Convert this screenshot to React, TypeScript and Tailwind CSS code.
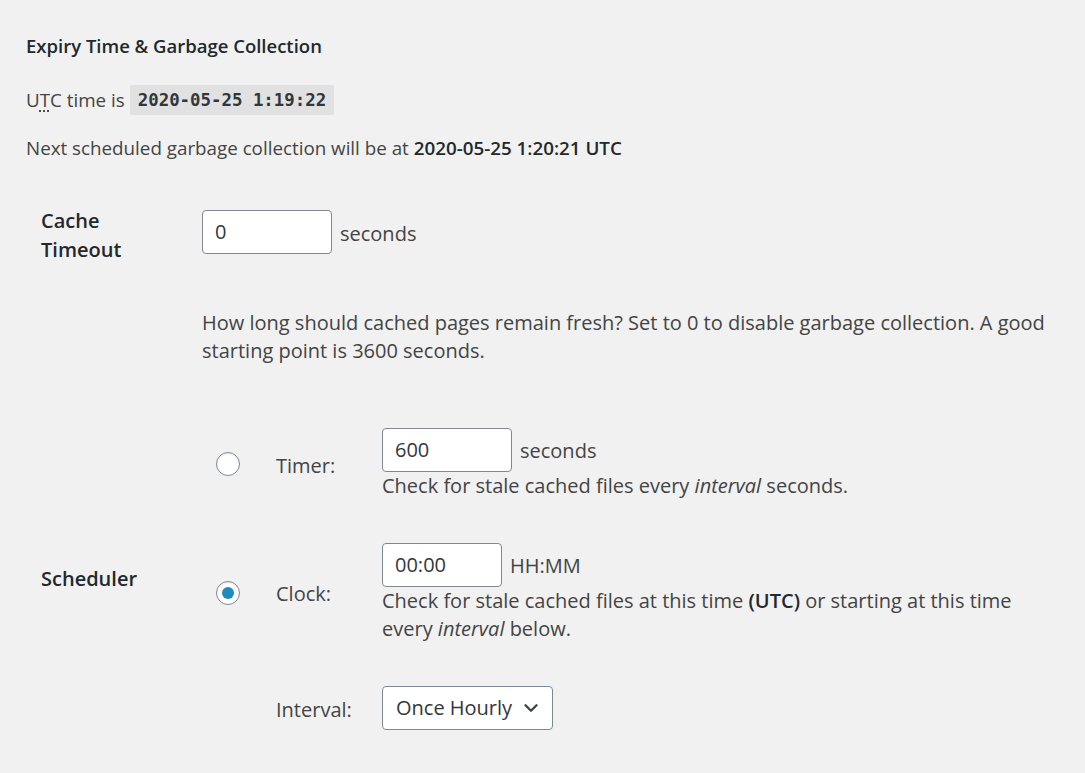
import { ChevronDown } from "lucide-react";

const textFont = { fontFamily: '"Open Sans", "Noto Sans", sans-serif' };

function TextInput({ value, width }: { value: string; width: string }) {
  return (
    <div
      className={`${width} h-[44px] shrink-0 rounded-[4px] border border-[#7e8993] bg-white px-[12px] flex items-center text-[#32373c]`}
    >
      {value}
    </div>
  );
}

function Radio({ checked }: { checked?: boolean }) {
  return (
    <span className="w-[24px] h-[24px] rounded-full border-[1.5px] border-[#7e8993] bg-white shadow-[inset_0_1px_2px_rgba(0,0,0,0.1)] flex items-center justify-center">
      {checked && <span className="w-[12px] h-[12px] rounded-full bg-[#1e8cbe]" />}
    </span>
  );
}

export default function App() {
  return (
    <div
      className="min-h-screen w-full bg-[#f1f1f1] text-[#444] pl-[26px] pr-[20px] pt-[32px] pb-[40px] text-[18.8px]"
      style={textFont}
    >
      <h4 className="font-semibold text-[#23282d] leading-[28px] text-[18.5px]">Expiry Time &amp; Garbage Collection</h4>

      <p className="mt-[25px] leading-[30px] flex items-center">
        <span>
          U<span className="underline decoration-dotted underline-offset-4">T</span>C time is
        </span>
        <code
          className="ml-[5px] bg-[#e1e1e1] px-[8px] h-[30px] flex items-center text-[17.4px] font-bold text-[#32373c]"
          style={{ fontFamily: '"DejaVu Sans Mono", "Liberation Mono", monospace' }}
        >
          2020-05-25 1:19:22
        </code>
      </p>

      <p className="mt-[19px] leading-[28px]">
        Next scheduled garbage collection will be at{" "}
        <strong className="font-semibold text-[#23282d]">2020-05-25 1:20:21 UTC</strong>
      </p>

      <div className="mt-[44px] text-[20px]">
        {/* Cache Timeout */}
        <div className="flex">
          <div className="w-[176px] shrink-0 pl-[15px] font-semibold text-[#23282d] leading-[29px]">
            Cache
            <br />
            Timeout
          </div>
          <div className="pt-[4px]">
            <div className="flex items-center gap-[8px]">
              <TextInput value="0" width="w-[130px]" />
              <span className="pt-[3px]">seconds</span>
            </div>
            <p className="mt-[55px] leading-[28px] whitespace-nowrap">
              How long should cached pages remain fresh? Set to 0 to disable garbage collection. A good
              <br />
              starting point is 3600 seconds.
            </p>
          </div>
        </div>

        {/* Scheduler */}
        <div className="flex items-center mt-[63px]">
          <div className="w-[176px] shrink-0 pl-[15px] font-semibold text-[#23282d] leading-[28px]">Scheduler</div>
          <div className="flex flex-col gap-[43px]">
            <div className="flex items-center">
              <div className="w-[74px] pl-[14px] flex items-center">
                <Radio />
              </div>
              <div className="w-[106px] leading-[28px] pt-[4px]">Timer:</div>
              <div>
                <div className="flex items-center gap-[8px]">
                  <TextInput value="600" width="w-[130px]" />
                  <span className="pt-[2px]">seconds</span>
                </div>
                <p className="leading-[28px] whitespace-nowrap">
                  Check for stale cached files every <em>interval</em> seconds.
                </p>
              </div>
            </div>

            <div className="flex items-center">
              <div className="w-[74px] pl-[14px] flex items-center">
                <Radio checked />
              </div>
              <div className="w-[106px] leading-[28px] pt-[2px]">Clock:</div>
              <div>
                <div className="flex items-center gap-[8px]">
                  <TextInput value="00:00" width="w-[120px]" />
                  <span className="pt-[2px]">HH:MM</span>
                </div>
                <p className="leading-[28px] whitespace-nowrap">
                  Check for stale cached files at this time <strong className="font-semibold text-[#23282d]">(UTC)</strong> or
                  starting at this time
                  <br />
                  every <em>interval</em> below.
                </p>
              </div>
            </div>

            <div className="flex items-center">
              <div className="w-[74px]" />
              <div className="w-[106px] leading-[28px] pt-[4px]">Interval:</div>
              <div className="w-[171px] h-[44px] rounded-[4px] border border-[#7e8993] bg-white pl-[13px] pr-[10px] flex items-center justify-between text-[#32373c]">
                <span>Once Hourly</span>
                <ChevronDown className="w-[22px] h-[22px] text-[#3c434a]" strokeWidth={2.6} />
              </div>
            </div>
          </div>
        </div>
      </div>
    </div>
  );
}
